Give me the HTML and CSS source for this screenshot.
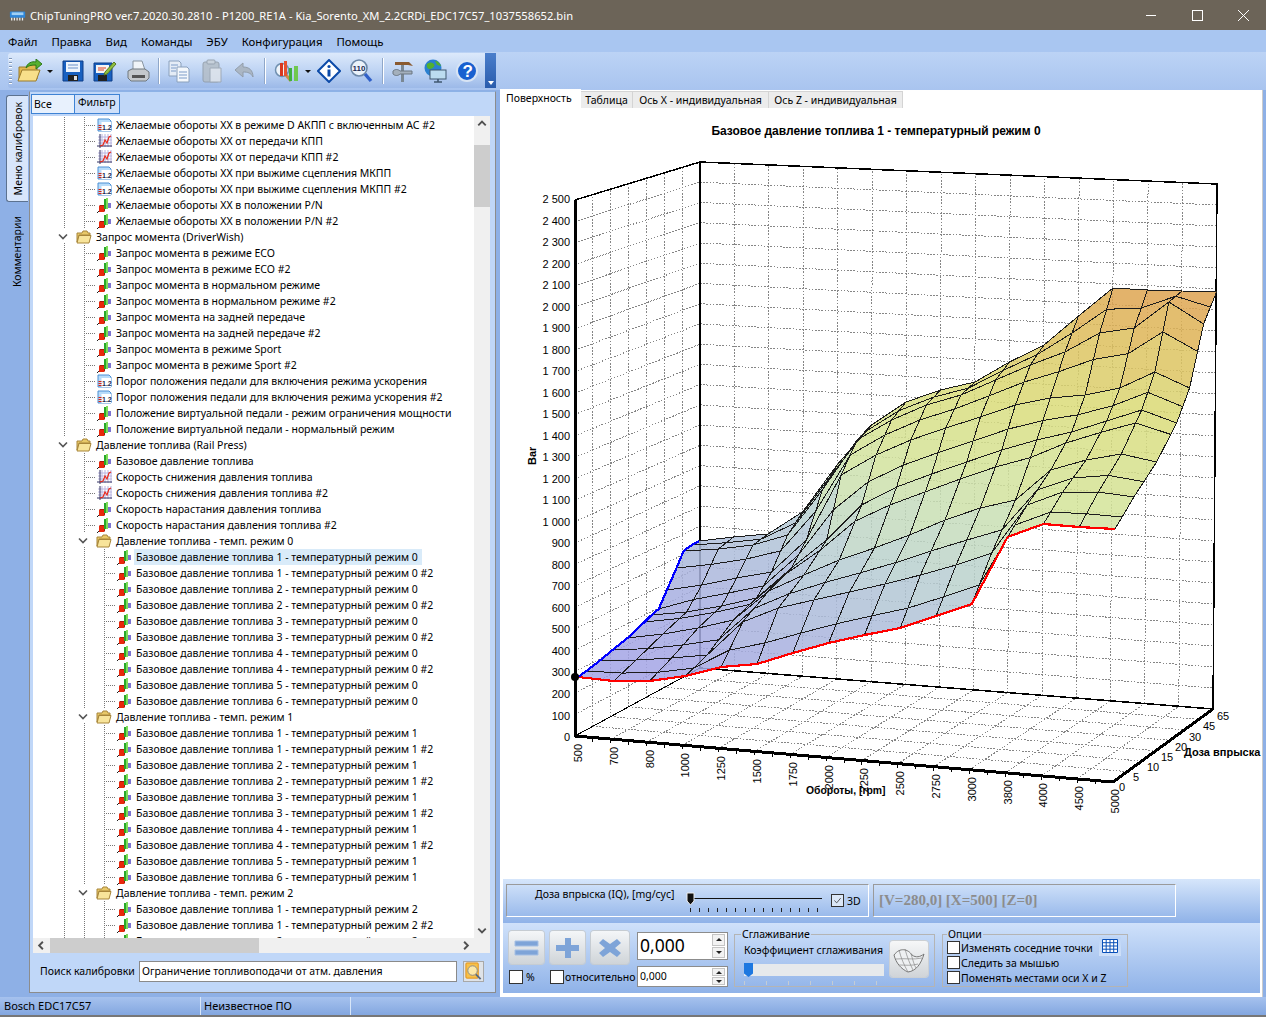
FILE: index.html
```html
<!DOCTYPE html>
<html lang="ru">
<head>
    <meta charset="UTF-8">
    <title>ChipTuningPRO</title>
    <link rel="stylesheet" href="styles.css">
</head>
<body>
    <svg class="defs" width="0" height="0">
        <symbol id="folder" viewBox="0 0 16 14"><path d="M1 3h5l1-2h4l1 2h2v2H3L1 12z" fill="#e8c868" stroke="#a8863a"/><path d="M3 5.5h12l-2 7.5H1z" fill="#f8e49a" stroke="#a8863a"/></symbol>
        <symbol id="arrow" viewBox="0 0 12 12"><path d="M2 3.5l4 4 4-4" fill="none" stroke="#555" stroke-width="1.6"/></symbol>
        <symbol id="bars" viewBox="0 0 15 16"><path d="M0 16l2-2" stroke="#222"/><rect x="2" y="9" width="5" height="6" fill="#e8280c"/><path d="M2 9l1-1h5l-1 1zM7 9l1-1v6l-1 1z" fill="#a81808"/><rect x="7" y="2" width="4" height="10" fill="#28a828"/><rect x="9" y="1" width="2" height="11" fill="#80dc5c"/><rect x="11" y="6" width="3" height="5" fill="#7c74d0"/></symbol>
        <symbol id="curve" viewBox="0 0 15 16"><path d="M1 4h14M1 7h14M1 10h14M5 1v13M8 1v13M11 1v13M14 1v13" stroke="#b8b4e0"/><path d="M3 1v14M0 13h15" stroke="#303060"/><path d="M3 13l3-1 2-5 2 3 2-6 2-1" fill="none" stroke="#e82818" stroke-width="1.2"/></symbol>
        <symbol id="table" viewBox="0 0 15 16"><path d="M1 2h11l2 2v10H1z" fill="#b8dcfa" stroke="#4c90d4"/><rect x="4.5" y="5" width="9.5" height="9" fill="#fff"/><path d="M1.5 8.5h3M1.5 10.5h3M1.5 12.5h3" stroke="#e02010"/><text x="5" y="12.8" class="ico-num">1.2</text></symbol>
    </svg>

    <div class="window">
        <div class="titlebar">
            <svg class="app-icon" viewBox="0 0 20 14"><rect x="1" y="2" width="17" height="7" rx="1" fill="#2e86d8"/><rect x="3" y="3" width="13" height="3" fill="#9fd0f5"/><path d="M3 9v3M6 9v3M9 9v3M12 9v3M15 9v3" stroke="#eee" stroke-width="1.4"/></svg>
            <span class="title-text">ChipTuningPRO ver.7.2020.30.2810 - P1200_RE1A - Kia_Sorento_XM_2.2CRDi_EDC17C57_1037558652.bin</span>
            <div class="win-btns">
                <svg viewBox="0 0 46 30"><path d="M18 15.5h10" stroke="#fff"/></svg>
                <svg viewBox="0 0 46 30"><rect x="18.5" y="10.5" width="10" height="10" fill="none" stroke="#fff"/></svg>
                <svg viewBox="0 0 46 30"><path d="M18 10l11 11M29 10L18 21" stroke="#fff"/></svg>
            </div>
        </div>

        <div class="menubar">
            <span>Файл</span><span>Правка</span><span>Вид</span><span>Команды</span><span>ЭБУ</span><span>Конфигурация</span><span>Помощь</span>
        </div>

        <div class="toolstrip">
            <div class="toolbar">
                <i class="grip"></i>
                <svg class="tb w26" viewBox="0 0 26 24"><path d="M2 8h8l2-2h8v14H2z" fill="#e2b84e" stroke="#9a7a2a"/><path d="M1 22l4-11h18l-4 11z" fill="#f8df8a" stroke="#9a7a2a"/><path d="M9 9c1-5 6-7 10-6V0l6 5-6 5V6c-3 0-7 0-10 3z" fill="#58b030" stroke="#2c7a18"/></svg>
                <i class="drop"></i>
                <svg class="tb w22" viewBox="0 0 22 24"><path d="M1 2h20v20H1z" fill="#1860c0" stroke="#0c3c88"/><rect x="4" y="3" width="14" height="10" fill="#eef4fc"/><path d="M6 6h10M6 9h10" stroke="#6a90c8"/><rect x="6" y="16" width="10" height="6" fill="#222"/><rect x="12" y="17" width="3" height="4" fill="#ddd"/></svg>
                <svg class="tb w24" viewBox="0 0 24 24"><path d="M1 4h18v18H1z" fill="#1860c0" stroke="#0c3c88"/><rect x="3" y="6" width="13" height="8" fill="#f4f4f4"/><path d="M5 9h8M5 11h6" stroke="#e04020"/><rect x="5" y="16" width="9" height="6" fill="#222"/><path d="M12 13L21 3l2 2-9 10-3 1z" fill="#90c040" stroke="#587a20"/></svg>
                <svg class="tb w24" viewBox="0 0 24 24"><path d="M7 2h9l3 9H7z" fill="#f0f4f8" stroke="#8894a0"/><path d="M2 12l4-2h13l4 3v6l-3 3H5l-3-3z" fill="#c4c8cc" stroke="#70787e"/><rect x="6" y="16" width="13" height="3" fill="#555"/></svg>
                <i class="sep"></i>
                <svg class="tb w22 m11" viewBox="0 0 22 24"><path d="M1 2h10l2 2v13H1z" fill="#e4ecf6" stroke="#8aa0bc"/><path d="M9 8h10l2 2v13H9z" fill="#f4f8fc" stroke="#8aa0bc"/><path d="M3 6h7M3 9h5M3 12h5M11 13h8M11 16h8M11 19h8" stroke="#7c9cc8"/></svg>
                <svg class="tb w22 m10 mute" viewBox="0 0 22 24"><rect x="2" y="3" width="16" height="20" rx="2" fill="#b4bec8" stroke="#8f9aa5"/><rect x="6" y="1" width="8" height="4" rx="1" fill="#c8d0d8" stroke="#8f9aa5"/><path d="M9 9h11v14H9z" fill="#dfe4ea" stroke="#9aa4ae"/></svg>
                <svg class="tb w22 m10 mute" viewBox="0 0 22 24"><path d="M2 11l8-7v4c6 0 10 3 10 10-2-4-5-5-10-5v5z" fill="#a8b2bc" stroke="#8a949e"/></svg>
                <i class="sep"></i>
                <svg class="tb w28" viewBox="0 0 28 24"><circle cx="8" cy="11" r="6.5" fill="#eef4fa" stroke="#7090b0" stroke-width="1.5"/><path d="M12 16l5 6" stroke="#c89048" stroke-width="3"/><rect x="6" y="4" width="3" height="13" fill="#d83820"/><rect x="10" y="2" width="3" height="15" fill="#e85030"/><rect x="15" y="9" width="3" height="13" fill="#40b040"/><rect x="20" y="7" width="4" height="15" fill="#70c850"/></svg>
                <i class="drop tight"></i>
                <svg class="tb w24 m8" viewBox="0 0 24 24"><path d="M12 1l11 11-11 11L1 12z" fill="#fff" stroke="#0c4aa8" stroke-width="2"/><circle cx="12" cy="7.5" r="1.6" fill="#0c4aa8"/><path d="M12 10.5v7" stroke="#0c4aa8" stroke-width="3"/></svg>
                <svg class="tb w24 m10" viewBox="0 0 24 24"><circle cx="10" cy="9" r="8" fill="#eaf2fa" stroke="#6d88a8" stroke-width="1.6"/><text x="3.5" y="12" class="ico-num big">110</text><path d="M16 15l6 7" stroke="#3060c8" stroke-width="3.4"/></svg>
                <i class="sep"></i>
                <svg class="tb w22" viewBox="0 0 22 24"><path d="M9 6v17h3V6z" fill="#7a8894"/><path d="M3 3h14l4 4-5-1H3z" fill="#8a5a30"/><path d="M1 12c2-2 5-2 7 0h12v3H8c-2 2-5 2-7 0z" fill="#a4b0bc" stroke="#6a7682"/></svg>
                <svg class="tb w24" viewBox="0 0 24 24"><circle cx="10" cy="9" r="8.5" fill="#2a80d0"/><path d="M4 5c3-2 5-2 7 0s-2 5-4 5-4-2-3-5zM12 2c3 0 5 2 6 5l-4-1z" fill="#50b030"/><rect x="7" y="11" width="16" height="9" fill="#bcdcf0" stroke="#405870"/><path d="M11 23h8M15 20v3" stroke="#405870" stroke-width="1.6"/></svg>
                <svg class="tb w22" viewBox="0 0 22 24"><circle cx="11" cy="12" r="10" fill="#1860d0" stroke="#d8e4f4" stroke-width="2"/><text x="6.6" y="17.5" class="help-mark">?</text></svg>
            </div>
        </div>

        <div class="main">
            <div class="side-tabs">
                <div class="side-tab active"><span>Меню калибровок</span></div>
                <div class="side-tab"><span>Комментарии</span></div>
            </div>

            <div class="left">
                <div class="list-tabs">
                    <span class="list-tab first">Все</span>
                    <span class="list-tab">Фильтр</span>
                </div>
                <div class="tree-frame">
                    <div class="tree">
                        <div class="row lv1"><svg class="ico"><use href="#table"/></svg>Желаемые обороты ХХ в режиме D АКПП с включенным АС #2</div>
                        <div class="row lv1"><svg class="ico"><use href="#curve"/></svg>Желаемые обороты ХХ от передачи КПП</div>
                        <div class="row lv1"><svg class="ico"><use href="#curve"/></svg>Желаемые обороты ХХ от передачи КПП #2</div>
                        <div class="row lv1"><svg class="ico"><use href="#table"/></svg>Желаемые обороты ХХ при выжиме сцепления МКПП</div>
                        <div class="row lv1"><svg class="ico"><use href="#table"/></svg>Желаемые обороты ХХ при выжиме сцепления МКПП #2</div>
                        <div class="row lv1"><svg class="ico"><use href="#bars"/></svg>Желаемые обороты ХХ в положении P/N</div>
                        <div class="row lv1"><svg class="ico"><use href="#bars"/></svg>Желаемые обороты ХХ в положении P/N #2</div>
                        <div class="row lv0"><svg class="arr"><use href="#arrow"/></svg><svg class="fld"><use href="#folder"/></svg>Запрос момента (DriverWish)</div>
                        <div class="row lv1"><svg class="ico"><use href="#bars"/></svg>Запрос момента в режиме ECO</div>
                        <div class="row lv1"><svg class="ico"><use href="#bars"/></svg>Запрос момента в режиме ECO #2</div>
                        <div class="row lv1"><svg class="ico"><use href="#bars"/></svg>Запрос момента в нормальном режиме</div>
                        <div class="row lv1"><svg class="ico"><use href="#bars"/></svg>Запрос момента в нормальном режиме #2</div>
                        <div class="row lv1"><svg class="ico"><use href="#bars"/></svg>Запрос момента на задней передаче</div>
                        <div class="row lv1"><svg class="ico"><use href="#bars"/></svg>Запрос момента на задней передаче #2</div>
                        <div class="row lv1"><svg class="ico"><use href="#bars"/></svg>Запрос момента в режиме Sport</div>
                        <div class="row lv1"><svg class="ico"><use href="#bars"/></svg>Запрос момента в режиме Sport #2</div>
                        <div class="row lv1"><svg class="ico"><use href="#table"/></svg>Порог положения педали для включения режима ускорения</div>
                        <div class="row lv1"><svg class="ico"><use href="#table"/></svg>Порог положения педали для включения режима ускорения #2</div>
                        <div class="row lv1"><svg class="ico"><use href="#bars"/></svg>Положение виртуальной педали - режим ограничения мощности</div>
                        <div class="row lv1"><svg class="ico"><use href="#bars"/></svg>Положение виртуальной педали - нормальный режим</div>
                        <div class="row lv0"><svg class="arr"><use href="#arrow"/></svg><svg class="fld"><use href="#folder"/></svg>Давление топлива (Rail Press)</div>
                        <div class="row lv1"><svg class="ico"><use href="#bars"/></svg>Базовое давление топлива</div>
                        <div class="row lv1"><svg class="ico"><use href="#curve"/></svg>Скорость снижения давления топлива</div>
                        <div class="row lv1"><svg class="ico"><use href="#curve"/></svg>Скорость снижения давления топлива #2</div>
                        <div class="row lv1"><svg class="ico"><use href="#bars"/></svg>Скорость нарастания давления топлива</div>
                        <div class="row lv1"><svg class="ico"><use href="#bars"/></svg>Скорость нарастания давления топлива #2</div>
                        <div class="row sub"><svg class="arr"><use href="#arrow"/></svg><svg class="fld"><use href="#folder"/></svg>Давление топлива - темп. режим 0</div>
                        <div class="row lv2"><svg class="ico"><use href="#bars"/></svg><span class="selected">Базовое давление топлива 1 - температурный режим 0</span></div>
                        <div class="row lv2"><svg class="ico"><use href="#bars"/></svg>Базовое давление топлива 1 - температурный режим 0 #2</div>
                        <div class="row lv2"><svg class="ico"><use href="#bars"/></svg>Базовое давление топлива 2 - температурный режим 0</div>
                        <div class="row lv2"><svg class="ico"><use href="#bars"/></svg>Базовое давление топлива 2 - температурный режим 0 #2</div>
                        <div class="row lv2"><svg class="ico"><use href="#bars"/></svg>Базовое давление топлива 3 - температурный режим 0</div>
                        <div class="row lv2"><svg class="ico"><use href="#bars"/></svg>Базовое давление топлива 3 - температурный режим 0 #2</div>
                        <div class="row lv2"><svg class="ico"><use href="#bars"/></svg>Базовое давление топлива 4 - температурный режим 0</div>
                        <div class="row lv2"><svg class="ico"><use href="#bars"/></svg>Базовое давление топлива 4 - температурный режим 0 #2</div>
                        <div class="row lv2"><svg class="ico"><use href="#bars"/></svg>Базовое давление топлива 5 - температурный режим 0</div>
                        <div class="row lv2"><svg class="ico"><use href="#bars"/></svg>Базовое давление топлива 6 - температурный режим 0</div>
                        <div class="row sub"><svg class="arr"><use href="#arrow"/></svg><svg class="fld"><use href="#folder"/></svg>Давление топлива - темп. режим 1</div>
                        <div class="row lv2"><svg class="ico"><use href="#bars"/></svg>Базовое давление топлива 1 - температурный режим 1</div>
                        <div class="row lv2"><svg class="ico"><use href="#bars"/></svg>Базовое давление топлива 1 - температурный режим 1 #2</div>
                        <div class="row lv2"><svg class="ico"><use href="#bars"/></svg>Базовое давление топлива 2 - температурный режим 1</div>
                        <div class="row lv2"><svg class="ico"><use href="#bars"/></svg>Базовое давление топлива 2 - температурный режим 1 #2</div>
                        <div class="row lv2"><svg class="ico"><use href="#bars"/></svg>Базовое давление топлива 3 - температурный режим 1</div>
                        <div class="row lv2"><svg class="ico"><use href="#bars"/></svg>Базовое давление топлива 3 - температурный режим 1 #2</div>
                        <div class="row lv2"><svg class="ico"><use href="#bars"/></svg>Базовое давление топлива 4 - температурный режим 1</div>
                        <div class="row lv2"><svg class="ico"><use href="#bars"/></svg>Базовое давление топлива 4 - температурный режим 1 #2</div>
                        <div class="row lv2"><svg class="ico"><use href="#bars"/></svg>Базовое давление топлива 5 - температурный режим 1</div>
                        <div class="row lv2"><svg class="ico"><use href="#bars"/></svg>Базовое давление топлива 6 - температурный режим 1</div>
                        <div class="row sub"><svg class="arr"><use href="#arrow"/></svg><svg class="fld"><use href="#folder"/></svg>Давление топлива - темп. режим 2</div>
                        <div class="row lv2"><svg class="ico"><use href="#bars"/></svg>Базовое давление топлива 1 - температурный режим 2</div>
                        <div class="row lv2"><svg class="ico"><use href="#bars"/></svg>Базовое давление топлива 1 - температурный режим 2 #2</div>
                        <div class="row lv2"><svg class="ico"><use href="#bars"/></svg>Базовое давление топлива 2 - температурный режим 2</div>
                    </div>
                    <div class="vscroll">
                        <svg class="sc-btn" viewBox="0 0 16 16"><path d="M4 10l4-4 4 4" fill="none" stroke="#505050" stroke-width="2"/></svg>
                        <div class="v-track"><i class="v-thumb"></i></div>
                        <svg class="sc-btn" viewBox="0 0 16 16"><path d="M4 6l4 4 4-4" fill="none" stroke="#505050" stroke-width="2"/></svg>
                    </div>
                    <div class="hscroll">
                        <svg class="sc-btn" viewBox="0 0 16 16"><path d="M10 4L6 8l4 4" fill="none" stroke="#505050" stroke-width="2"/></svg>
                        <div class="h-track"><i class="h-thumb"></i></div>
                        <svg class="sc-btn" viewBox="0 0 16 16"><path d="M6 4l4 4-4 4" fill="none" stroke="#505050" stroke-width="2"/></svg>
                    </div>
                </div>
                <div class="search">
                    <label>Поиск калибровки</label>
                    <div class="search-input">Ограничение топливоподачи от атм. давления</div>
                    <div class="search-btn">
                        <svg viewBox="0 0 20 20"><rect x="2" y="1" width="13" height="16" rx="1" fill="#f8c048" stroke="#e09018"/><circle cx="9" cy="9" r="5" fill="#fce8a8" stroke="#888"/><path d="M12.5 13l5 5" stroke="#5a6a80" stroke-width="2"/></svg>
                    </div>
                </div>
            </div>

            <div class="right">
                <div class="tabs">
                    <span class="tab active">Поверхность</span>
                    <span class="tab tab-table">Таблица</span>
                    <span class="tab tab-x">Ось X - индивидуальная</span>
                    <span class="tab tab-z">Ось Z - индивидуальная</span>
                </div>
                <div class="chart-panel">
                    <svg id="chart" width="762" height="770" viewBox="500 108 762 770"></svg>
                </div>
                <div class="band slider-band">
                    <div class="group iq-group">
                        <span class="iq-label">Доза впрыска (IQ), [mg/cyc]</span>
                        <div class="iq-slider">
                            <i class="iq-line"></i>
                            <svg class="iq-thumb" viewBox="0 0 9 14"><path d="M1 1h7v8l-3.5 4L1 9z" fill="#111" stroke="#eee"/></svg>
                            <i class="iq-ticks"></i>
                        </div>
                        <span class="check on"><svg viewBox="0 0 14 14"><path d="M3 7l3 3 5-6" fill="none" stroke="#333"/></svg></span>
                        <span>3D</span>
                    </div>
                    <div class="group readout">[V=280,0] [X=500] [Z=0]</div>
                </div>
                <div class="band controls-band">
                    <div class="ops">
                        <div class="op-buttons">
                            <div class="op-btn"><svg viewBox="0 0 35 33"><path d="M6 10h23v5H6zM6 19h23v5H6z" fill="#7ea4d8" stroke="#a6c0e4"/></svg></div>
                            <div class="op-btn"><svg viewBox="0 0 35 33"><path d="M15 7h6v7h8v6h-8v7h-6v-7H6v-6h9z" fill="#7ea4d8"/></svg></div>
                            <div class="op-btn wide"><svg viewBox="0 0 38 33"><path d="M12 8l7 5 7-5 4 4-6 5 6 5-4 4-7-5-7 5-4-4 6-5-6-5z" fill="#7ea4d8"/></svg></div>
                        </div>
                        <div class="op-checks">
                            <span class="check"></span><span class="pct">%</span>
                            <span class="check rel"></span><span>относительно</span>
                        </div>
                    </div>
                    <div class="spins">
                        <div class="spin big">0,000<div class="spin-btns"><i class="up"></i><i class="down"></i></div></div>
                        <div class="spin">0,000<div class="spin-btns"><i class="up"></i><i class="down"></i></div></div>
                    </div>
                    <fieldset class="smooth">
                        <legend>Сглаживание</legend>
                        <div class="smooth-col">
                            <span>Коэффициент сглаживания</span>
                            <div class="smooth-track"><i class="smooth-thumb"></i></div>
                            <i class="smooth-ticks"></i>
                        </div>
                        <div class="mesh-btn">
                            <svg viewBox="0 0 38 36"><path d="M4 14c6-8 14-6 18 0 4 3 8 2 12-1-3 10-8 17-16 18C11 28 6 22 4 14z" fill="#eef0f2" stroke="#777"/><path d="M9 9c2 8 5 15 9 22M15 8c2 8 5 15 8 21M21 13c2 6 3 11 5 14M6 18c8-1 18 1 26-1M9 24c6 0 13 1 19-1" fill="none" stroke="#888" stroke-width=".7"/></svg>
                        </div>
                    </fieldset>
                    <fieldset class="options">
                        <legend>Опции</legend>
                        <div class="opt"><span class="check"></span>Изменять соседние точки
                            <div class="grid-btn"><svg viewBox="0 0 16 14"><path d="M.5.5h15v13H.5zM.5 3.7h15M.5 7h15M.5 10.2h15M4.2.5v13M8 .5v13M11.7.5v13" fill="#fff" stroke="#0a50b8"/></svg></div>
                        </div>
                        <div class="opt"><span class="check"></span>Следить за мышью</div>
                        <div class="opt"><span class="check"></span>Поменять местами оси X и Z</div>
                    </fieldset>
                </div>
            </div>
        </div>

        <div class="status">
            <span class="pane first">Bosch EDC17C57</span>
            <span class="pane second">Неизвестное ПО</span>
            <span class="pane rest"></span>
        </div>
    </div>

    <script src="chart.js"></script>
</body>
</html>
```

FILE: styles.css
```css
:root { --panel: #c0d7f8; --back: #8eb0e6; --edge: #8c8c8c; --font: "Noto Sans", "Open Sans", sans-serif; }
* { margin: 0; padding: 0; box-sizing: border-box; }
body { width: 1266px; height: 1017px; overflow: hidden; font-family: var(--font); font-size: 10.5px; color: #000; background: var(--back); }
.defs { position: absolute; }
.ico-num { font-family: "Liberation Sans", sans-serif; font-size: 7px; font-weight: bold; fill: #1a2a50; }
.ico-num.big { font-size: 8px; }
.help-mark { font-family: "Liberation Sans", sans-serif; font-size: 17px; font-weight: bold; fill: #fff; }

.window { display: flex; flex-direction: column; height: 1017px; }

.titlebar { height: 30px; background: #6c6458; color: #fff; display: flex; align-items: center; padding: 1px 0 0 9px; font-size: 11.2px; }
.app-icon { width: 18px; height: 14px; margin-right: 3px; }
.title-text { flex: 1; }
.win-btns { display: flex; margin-top: -1px; }
.win-btns svg { width: 46px; height: 30px; }

.menubar { height: 22px; background: #a9c6f1; display: flex; align-items: center; padding-left: 8px; gap: 14px; font-size: 11.4px; }

.toolstrip { height: 38px; background: linear-gradient(#bcd3f5, #a9c4ef); padding: 1px 0 2px 8px; }
.toolbar { width: 488px; height: 35px; display: flex; align-items: center; padding-left: 1px; border-radius: 3px 0 0 3px; background: linear-gradient(#dce9fb, #b9d0f2 60%, #9cb9e8); position: relative; }
.toolbar::after { content: ""; position: absolute; right: 0; top: 0; width: 11px; height: 35px; background: linear-gradient(#4a7ecb, #2a5cac); }
.toolbar::before { content: ""; position: absolute; z-index: 1; right: 2px; bottom: 3px; width: 0; height: 0; border: 3px solid transparent; border-top: 4px solid #fff; border-bottom: 0; }
.grip { width: 3px; height: 26px; margin-right: 5px; background: repeating-linear-gradient(#7f96b8 0 1px, #fff 1px 2px, transparent 2px 4px); }
.tb { height: 24px; flex: none; margin-right: 9px; }
.tb.w22 { width: 22px; }
.tb.w24 { width: 24px; }
.tb.w26 { width: 26px; margin-right: 2px; }
.tb.w28 { width: 28px; margin-right: 1px; }
.tb.m8 { margin-right: 8px; }
.tb.m10 { margin-right: 10px; }
.tb.m11 { margin-right: 11px; }
.drop { width: 0; height: 0; border: 3px solid transparent; border-top: 3px solid #111; border-bottom: 0; margin: 1px 9px 0 2px; }
.drop.tight { margin-right: 6px; }
.sep { width: 2px; height: 26px; background: #8fa7c9; border-right: 1px solid #fff; margin: 0 8px 0 -1px; }
.mute { opacity: .85; }

.main { flex: 1; display: flex; min-height: 0; }

.side-tabs { width: 29px; padding: 5px 0 0 6px; display: flex; flex-direction: column; gap: 9px; }
.side-tab { width: 22px; display: flex; justify-content: center; align-items: center; }
.side-tab span { writing-mode: vertical-rl; transform: rotate(180deg); }
.side-tab.active { height: 107px; background: #d8e6fb; border: 1px solid #5c7290; border-right: 0; border-radius: 3px 0 0 3px; margin-right: -1px; }
.side-tab:not(.active) { height: 82px; }

.left { width: 467px; margin: 1px 0 4px; background: var(--panel); border: 1px solid var(--edge); border-top: 1px solid #8db2e6; padding: 2px 5px 0 3px; display: flex; flex-direction: column; }
.list-tabs { display: flex; height: 20px; margin-left: -2px; margin-bottom: 2px; }
.list-tab { border: 1px solid #3f83d4; background: #cfe0fa; width: 46px; padding: 0 0 0 3px; line-height: 15px; }
.list-tab.first { width: 43px; background: #e8f1fd; border-right: 0; padding-left: 2px; line-height: 19px; }

.tree-frame { height: 837px; display: grid; grid-template-columns: 441px 16px; grid-template-rows: 822px 15px; background: #f0f0f0; }
.tree { overflow: hidden; background: #fff; padding-top: 1px; }
.row { height: 16px; display: flex; align-items: center; white-space: nowrap; line-height: 16px;
    --dv: repeating-linear-gradient(to bottom, #777 0 1px, transparent 1px 2px);
    --dh: repeating-linear-gradient(to right, #777 0 1px, transparent 1px 2px);
    background-image: var(--dv), var(--dv);
    background-size: 1px 100%, 1px 100%;
    background-position: 31px 0, 51px 0;
    background-repeat: no-repeat; }
.row.lv0 { padding-left: 24px; background-image: var(--dv); background-position: 31px 8px; }
.row.sub { padding-left: 44px; background-position: 31px 0, 51px 8px; }
.row.lv1 { padding-left: 64px; background-image: var(--dv), var(--dv), var(--dh); background-size: 1px 100%, 1px 100%, 12px 1px; background-position: 31px 0, 51px 0, 51px 8px; }
.row.lv2 { padding-left: 84px; background-image: var(--dv), var(--dv), var(--dv), var(--dh); background-size: 1px 100%, 1px 100%, 1px 100%, 12px 1px; background-position: 31px 0, 51px 0, 71px 0, 71px 8px; }
.arr { width: 12px; height: 12px; margin-right: 7px; flex: none; background: #fff; }
.fld { width: 16px; height: 14px; margin-right: 4px; flex: none; }
.ico { width: 15px; height: 16px; margin-right: 4px; flex: none; }
.selected { background: #d9ebf9; padding: 0 4px 0 2px; margin-left: -2px; }

.vscroll { background: #f0f0f0; display: flex; flex-direction: column; }
.hscroll { background: #f0f0f0; display: flex; align-items: center; }
.sc-btn { width: 16px; height: 15px; flex: none; }
.v-track { flex: 1; }
.v-thumb { display: block; height: 62px; margin-top: 14px; background: #cdcdcd; }
.h-track { flex: 1; height: 15px; }
.h-thumb { display: block; width: 209px; height: 15px; margin-left: 1px; background: #cdcdcd; }

.search { flex: 1; display: flex; align-items: center; padding: 0 0 3px 7px; }
.search label { width: 99px; flex: none; white-space: nowrap; }
.search-input { width: 318px; height: 21px; background: #fff; border: 1px solid #8a8a8a; padding-left: 2px; line-height: 18px; }
.search-btn { width: 21px; height: 21px; margin-left: 6px; background: #dfe3e8; border: 1px solid #a8a8a8; }
.search-btn svg { display: block; width: 19px; height: 19px; }

.right { width: 763px; margin-left: 4px; background: #fff; border-right: 1px solid #ccc; display: flex; flex-direction: column; }
.tabs { height: 18px; display: flex; align-items: flex-end; }
.tab { height: 17px; background: #ececec; border: 1px solid #d4d4d4; border-left: 0; border-bottom: 0; line-height: 17px; text-align: center; }
.tab.active { height: 19px; width: 81px; background: #fff; border: 0; line-height: 19px; padding-left: 6px; text-align: left; }
.tab-table { width: 52px; }
.tab-x { width: 136px; }
.tab-z { width: 134px; }
.chart-panel { height: 770px; }
#chart { display: block; }
.chart-tx { font-family: "Liberation Sans", sans-serif; font-size: 11px; fill: #000; }
.chart-tx.bold { font-weight: bold; }
.chart-tx.axis-x { font-size: 10.4px; }
.chart-tx.title { font-size: 12px; font-weight: bold; }

.band { margin: 0 2px 0 3px; }
.slider-band { height: 44px; margin-top: 1px; display: flex; gap: 4px; padding: 5px 0 0 3px; background: linear-gradient(#d6e6fb, #8fb2e8); }
.group { height: 33px; border: 1px solid; border-color: #9a9a9a #fff #fff #9a9a9a; }
.iq-group { width: 363px; display: flex; align-items: center; padding-left: 28px; }
.iq-label { align-self: flex-start; margin-top: 2px; width: 151px; flex: none; }
.iq-slider { width: 136px; height: 30px; position: relative; margin-right: 9px; flex: none; }
.iq-line { position: absolute; left: 4px; right: 0; top: 12px; height: 1px; background: #111; }
.iq-thumb { position: absolute; left: 0; top: 6px; width: 9px; height: 14px; }
.iq-ticks { position: absolute; left: 4px; right: 3px; top: 22px; height: 4px; background: repeating-linear-gradient(to right, #222 0 1px, transparent 1px 9.1px); }
.check { display: inline-block; flex: none; width: 13px; height: 13px; background: #fff; border: 1px solid #333; }
.check.on { background: #dbe7f7; margin-right: 3px; }
.check.on svg { display: block; width: 11px; height: 11px; }
.readout { width: 303px; padding-left: 5px; font-family: "Liberation Serif", serif; font-weight: bold; font-size: 15px; color: #8c8c8c; line-height: 30px; }

.controls-band { height: 70px; margin-top: 0; display: flex; align-items: flex-start; padding: 5px 0 0 6px; background: linear-gradient(#cfe1fa, #8fb2e8); }
.ops { width: 128px; padding-top: 3px; }
.op-buttons { display: flex; gap: 6px; }
.op-btn { width: 35px; height: 33px; border-radius: 3px; background: linear-gradient(#f4f6f8, #cfd4d8); box-shadow: 0 0 0 1px #c6ccd2; }
.op-btn.wide { width: 38px; }
.op-btn svg { display: block; width: 100%; height: 100%; }
.op-checks { display: flex; align-items: center; margin-top: 6px; }
.op-checks .check { width: 14px; height: 14px; }
.pct { margin-left: 3px; width: 24px; }
.op-checks .rel { margin-right: 1px; }
.spins { width: 91px; padding-top: 4px; }
.spin { width: 91px; height: 21px; background: #fff; border: 1px solid #8c8c8c; padding-left: 2px; line-height: 19px; position: relative; margin-top: 6px; }
.spin.big { height: 28px; font-size: 17.5px; line-height: 25px; margin-top: 0; }
.spin-btns { position: absolute; right: 2px; top: 1px; bottom: 1px; width: 13px; display: flex; flex-direction: column; gap: 1px; }
.spin-btns i { flex: 1; background: #f2f2f2; border: 1px solid #c4c4c4; display: flex; align-items: center; justify-content: center; }
.spin-btns i::after { content: ""; border: 3px solid transparent; }
.spin-btns .up::after { border-bottom: 3px solid #222; border-top: 0; }
.spin-btns .down::after { border-top: 3px solid #222; border-bottom: 0; }
fieldset { border: 1px solid #b4b4b4; height: 59px; }
legend { margin-left: 6px; padding: 0 1px; line-height: 13px; }
.smooth { width: 201px; margin-left: 6px; display: flex; }
.smooth-col { width: 155px; padding: 2px 0 0 9px; display: flex; flex-direction: column; }
.smooth-col span { white-space: nowrap; line-height: 15px; }
.smooth-track { width: 140px; height: 12px; margin-top: 6px; background: #e6e9ec; position: relative; }
.smooth-thumb { position: absolute; left: 0; top: -1px; width: 9px; height: 14px; background: #1e78e0; clip-path: polygon(0 0, 100% 0, 100% 75%, 50% 100%, 0 75%); }
.smooth-ticks { width: 140px; height: 4px; margin-top: 5px; background: repeating-linear-gradient(to right, #c4ccd4 0 1px, transparent 1px 22px); }
.mesh-btn { width: 38px; height: 36px; margin-top: 0; border-radius: 3px; background: linear-gradient(#f6f7f8, #d0d4d8); box-shadow: 0 0 0 1px #ccd0d4; }
.mesh-btn svg { display: block; width: 100%; height: 100%; }
.options { width: 186px; margin-left: 7px; padding-left: 4px; }
.options legend { margin-left: 0; }
.opt { height: 15px; display: flex; align-items: center; white-space: nowrap; position: relative; }
.opt:nth-of-type(1) { margin-top: -1px; }
.opt .check { width: 13px; height: 13px; margin-right: 1px; }
.grid-btn { position: absolute; left: 152px; top: -3px; width: 22px; height: 19px; background: linear-gradient(#bcd4f6, #cfe0f8); padding: 2px 3px; }
.grid-btn svg { display: block; width: 16px; height: 14px; }

.status { height: 20px; display: flex; border-bottom: 2px solid #777; background: linear-gradient(#a6c2ee, #83a7e0); line-height: 17px; gap: 2px; font-size: 11px; }
.pane { height: 18px; border-right: 1px solid #d8e6f8; padding-left: 4px; }
.pane.first { width: 201px; }
.pane.second { width: 148px; padding-left: 1px; }
.pane.rest { flex: 1; border: 0; }
```

FILE: chart.js
```js
// screen y of the surface, one line per control row (rows run from z=0 to the back)
const rowV = [0, 0.186, 0.41, 0.608, 0.735, 0.873, 1];
const rowY = [
    [678, 681, 681, 676, 667, 664, 653, 643, 635, 628, 616, 604, 537, 524, 527, 529],
    [660, 660, 658, 655, 622, 608, 600, 592, 584, 575, 565, 553, 505, 492, 492, 497],
    [638, 634, 628, 620, 591, 575, 560, 548, 535, 520, 508, 500, 470, 460, 454, 462],
    [615, 612, 606, 598, 568, 540, 505, 487, 474, 462, 450, 440, 432, 421, 410, 423],
    [590, 585, 578, 572, 540, 475, 455, 440, 428, 417, 405, 398, 395, 388, 372, 388],
    [551, 549, 545, 535, 490, 440, 420, 405, 395, 380, 365, 352, 333, 328, 302, 324],
    [541, 537, 534, 512, 465, 425, 402, 390, 382, 362, 345, 316, 288, 290, 291, 292]
];
const meshV = [0, 0.07, 0.186, 0.284, 0.41, 0.55, 0.608, 0.667, 0.735, 0.814, 0.873, 0.94, 1];
const blueY = [677, 671, 660, 650, 638, 622, 615, 609, 590, 568, 551, 545, 541];
const COLS = 16;

const xLabels = [500, 700, 800, 1000, 1250, 1500, 1750, 2000, 2250, 2500, 2750, 3000, 3800, 4000, 4500, 5000];
const zLabels = [0, 5, 10, 15, 20, 30, 45, 65];

const colorStops = [
    [280, [162, 162, 230]], [600, [172, 186, 219]], [800, [184, 207, 209]], [1000, [199, 222, 186]],
    [1200, [212, 228, 153]], [1500, [218, 219, 118]], [1800, [222, 186, 89]], [2050, [222, 150, 75]]
];

const lerp = (a, b, t) => a + (b - a) * t;
const bilerp = (a00, a10, a01, a11, u, v) => lerp(lerp(a00, a10, u), lerp(a01, a11, u), v);

// walls: u along rpm, v along dose, w along pressure
function wall(u, v, w) {
    const x = bilerp(575, 1113, 700, 1213, u, v) + w * bilerp(0, 0, 0, 4, u, v);
    const y = bilerp(736, 782, 668, 709, u, v);
    return [x, y - w * bilerp(536, 560, 506, 525, u, v)];
}

function surfaceY(i, v) {
    if (i === 0) return blueY[meshV.indexOf(v)];
    let r = 0;
    while (r < rowV.length - 2 && v > rowV[r + 1]) r++;
    const t = (v - rowV[r]) / (rowV[r + 1] - rowV[r]);
    return lerp(rowY[r][i], rowY[r + 1][i], t);
}

function meshPoint(i, v) {
    const x = lerp(578 + 35.8 * i, 699 + 34.5 * i, v);
    return [x, surfaceY(i, v)];
}

function barAt(i, v) {
    const u = i / (COLS - 1);
    const floor = bilerp(736, 782, 668, 709, u, v);
    return (floor - surfaceY(i, v)) / bilerp(536, 560, 506, 525, u, v) * 2500;
}

function colorFor(bar) {
    let k = 0;
    while (k < colorStops.length - 2 && bar > colorStops[k + 1][0]) k++;
    const [b0, c0] = colorStops[k];
    const [b1, c1] = colorStops[k + 1];
    const t = Math.max(0, Math.min(1, (bar - b0) / (b1 - b0)));
    return `rgb(${c0.map((c, n) => Math.round(lerp(c, c1[n], t))).join(',')})`;
}

const pts = list => list.map(p => p[0].toFixed(1) + ',' + p[1].toFixed(1)).join(' ');
const dotted = (a, b) => `<polyline points="${pts([a, b])}" class="gd"/>`;

let out = `<style>.gd{fill:none;stroke:#858585;stroke-dasharray:1.6 1.6;shape-rendering:crispEdges}
.ax{fill:none;stroke:#000;shape-rendering:crispEdges}.mesh{fill:none;stroke:#1c1c1c;stroke-width:1;shape-rendering:crispEdges}
.edge{fill:none;stroke-width:2.2;shape-rendering:crispEdges}</style>`;

// dotted grids on both walls and on the floor
for (let k = 1; k < 25; k++) {
    const w = k / 25;
    out += dotted(wall(0, 0, w), wall(0, 1, w)) + dotted(wall(0, 1, w), wall(1, 1, w));
}
for (let k = 1; k < 15; k++) {
    const u = k / 15;
    out += dotted(wall(u, 1, 0), wall(u, 1, 1)) + dotted(wall(u, 0, 0), wall(u, 1, 0));
}
for (let k = 1; k < 7; k++) {
    const v = k / 7;
    out += dotted(wall(0, v, 0), wall(0, v, 1)) + dotted(wall(0, v, 0), wall(1, v, 0));
}

// wall frame
out += `<polyline class="ax" stroke-width="1.5" points="${pts([wall(0, 0, 1), wall(0, 1, 1), wall(1, 1, 1), wall(1, 1, 0), wall(0, 1, 0), wall(0, 1, 1)])}"/>`;
out += `<polyline class="ax" points="${pts([wall(0, 0, 0), wall(0, 1, 0)])}"/>`;

// surface, back to front
for (let j = meshV.length - 2; j >= 0; j--) {
    for (let i = 0; i < COLS - 1; i++) {
        const v0 = meshV[j], v1 = meshV[j + 1];
        const bar = (barAt(i, v0) + barAt(i + 1, v0) + barAt(i, v1) + barAt(i + 1, v1)) / 4;
        const quad = [meshPoint(i, v0), meshPoint(i + 1, v0), meshPoint(i + 1, v1), meshPoint(i, v1)];
        out += `<polygon points="${pts(quad)}" fill="${colorFor(bar)}" fill-opacity="0.85" stroke="${colorFor(bar)}" stroke-opacity="0.3" stroke-width="0.4"/>`;
    }
}
for (let j = 1; j < meshV.length; j++) {
    const line = xLabels.map((_, i) => meshPoint(i, meshV[j]));
    out += `<polyline class="mesh" points="${pts(line)}"/>`;
}
for (let i = 1; i < COLS; i++) {
    out += `<polyline class="mesh" points="${pts(meshV.map(v => meshPoint(i, v)))}"/>`;
}

const frontEdge = xLabels.map((_, i) => meshPoint(i, 0));
const leftEdge = meshV.map(v => meshPoint(0, v));
out += `<polyline class="edge" points="${pts(frontEdge)}" stroke="#f00"/>`;
out += `<polyline class="edge" points="${pts(leftEdge)}" stroke="#00f"/>`;

// thick front axes with ticks
out += `<polyline class="ax" stroke-width="3" points="${pts([wall(0, 0, 1), wall(0, 0, 0), wall(1, 0, 0), wall(1, 1, 0)])}"/>`;
for (let k = 1; k < 30; k++) {
    const p = wall(k / 30, 0, 0);
    out += `<path class="ax" d="M${p[0]} ${p[1]}v4"/>`;
}
out += `<circle cx="575" cy="677" r="4" fill="#000"/>`;

// labels
for (let k = 0; k <= 25; k++) {
    const val = k * 100;
    const txt = val >= 1000 ? Math.floor(val / 1000) + ' ' + String(val % 1000).padStart(3, '0') : val;
    out += `<text class="chart-tx" x="570" y="${(741 - k * 21.52).toFixed(1)}" text-anchor="end">${txt}</text>`;
}
xLabels.forEach((val, i) => {
    const x = 578 + 35.8 * i;
    const y = 744 + 3 * i;
    out += `<text class="chart-tx" transform="translate(${x + 4} ${y}) rotate(-90)" text-anchor="end">${val}</text>`;
});
zLabels.forEach((val, k) => {
    out += `<text class="chart-tx" x="${1119 + k * 14}" y="${791 - k * 10.1}">${val}</text>`;
});
out += `<text class="chart-tx title" x="876" y="135" text-anchor="middle">Базовое давление топлива 1 - температурный режим 0</text>`;
out += `<text class="chart-tx bold axis-x" x="806" y="794">Обороты, [rpm]</text>`;
out += `<text class="chart-tx bold" transform="translate(536 465) rotate(-90)">Bar</text>`;
out += `<text class="chart-tx bold" x="1184" y="756">Доза впрыска (</text>`;

document.getElementById('chart').innerHTML = out;
```
